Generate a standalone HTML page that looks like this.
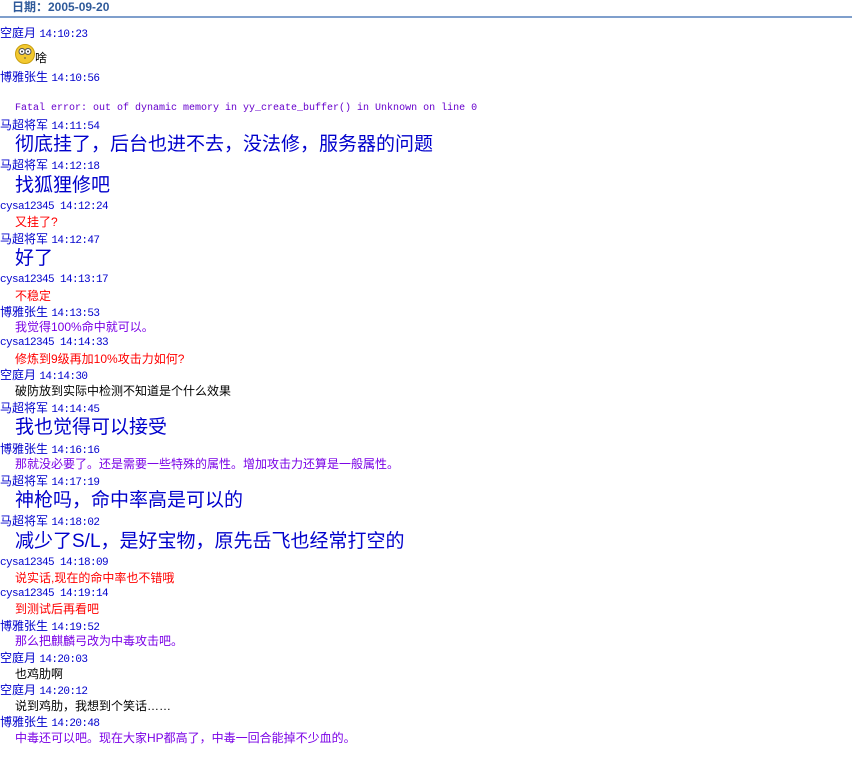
<!DOCTYPE html>
<html><head><meta charset="utf-8"><style>
body{margin:0;width:852px;height:769px;background:#fff;position:relative;overflow:hidden;font-family:"Liberation Sans","Noto Sans CJK SC","WenQuanYi Zen Hei",sans-serif;font-size:12px}
.h{position:absolute;left:12px;top:0;font-weight:bold;color:#2f5a9a;font-size:12px;line-height:14px}
.ln{position:absolute;left:0;top:16px;width:852px;height:2px;background:#7f9fcc}
.r{position:absolute;left:0;white-space:nowrap;line-height:16px;height:16px}
.n{color:#0000cc;font-size:12px}
.t{font-family:"Liberation Mono",monospace;font-size:11px;letter-spacing:-0.6px}
.m{left:15px}
.b{font-size:19px;color:#0000cc;line-height:22px;height:22px;left:15px}
.red{color:#ff0000}.pur{color:#7a00e6}.blk{color:#000}
.f{font-family:"Liberation Mono",monospace;font-size:10px;color:#6600cc}
</style></head><body>
<div class="h">日期：2005-09-20</div><div class="ln"></div>
<div class="r n" style="top:25px">空庭月 <span class="t">14:10:23</span></div>
<div class="r m blk" style="top:44px;height:22px;line-height:28px"><svg width="20" height="20" viewBox="0 0 20 20" style="vertical-align:-2px"><circle cx="10" cy="10" r="9.5" fill="#f2c830" stroke="#c9a010"/><circle cx="7" cy="7.5" r="3" fill="#fff" stroke="#555"/><circle cx="13" cy="7.5" r="3" fill="#fff" stroke="#555"/><circle cx="7" cy="7.5" r="1" fill="#333"/><circle cx="13" cy="7.5" r="1" fill="#333"/><path d="M9 14h2" stroke="#555"/></svg>啥</div>
<div class="r n" style="top:69px">博雅张生 <span class="t">14:10:56</span></div>
<div class="r m f" style="top:101px">Fatal error: out of dynamic memory in yy_create_buffer() in Unknown on line 0</div>
<div class="r n" style="top:117px">马超将军 <span class="t">14:11:54</span></div>
<div class="r b" style="top:134px">彻底挂了，后台也进不去，没法修，服务器的问题</div>
<div class="r n" style="top:157px">马超将军 <span class="t">14:12:18</span></div>
<div class="r b" style="top:175px">找狐狸修吧</div>
<div class="r n t" style="top:199px">cysa12345 14:12:24</div>
<div class="r m red" style="top:214px">又挂了?</div>
<div class="r n" style="top:231px">马超将军 <span class="t">14:12:47</span></div>
<div class="r b" style="top:248px">好了</div>
<div class="r n t" style="top:272px">cysa12345 14:13:17</div>
<div class="r m red" style="top:288px">不稳定</div>
<div class="r n" style="top:304px">博雅张生 <span class="t">14:13:53</span></div>
<div class="r m pur" style="top:319px">我觉得100%命中就可以。</div>
<div class="r n t" style="top:335px">cysa12345 14:14:33</div>
<div class="r m red" style="top:351px">修炼到9级再加10%攻击力如何?</div>
<div class="r n" style="top:367px">空庭月 <span class="t">14:14:30</span></div>
<div class="r m blk" style="top:383px">破防放到实际中检测不知道是个什么效果</div>
<div class="r n" style="top:400px">马超将军 <span class="t">14:14:45</span></div>
<div class="r b" style="top:417px">我也觉得可以接受</div>
<div class="r n" style="top:441px">博雅张生 <span class="t">14:16:16</span></div>
<div class="r m pur" style="top:456px">那就没必要了。还是需要一些特殊的属性。增加攻击力还算是一般属性。</div>
<div class="r n" style="top:473px">马超将军 <span class="t">14:17:19</span></div>
<div class="r b" style="top:490px">神枪吗，命中率高是可以的</div>
<div class="r n" style="top:513px">马超将军 <span class="t">14:18:02</span></div>
<div class="r b" style="top:531px">减少了S/L，是好宝物，原先岳飞也经常打空的</div>
<div class="r n t" style="top:555px">cysa12345 14:18:09</div>
<div class="r m red" style="top:570px">说实话,现在的命中率也不错哦</div>
<div class="r n t" style="top:586px">cysa12345 14:19:14</div>
<div class="r m red" style="top:601px">到测试后再看吧</div>
<div class="r n" style="top:618px">博雅张生 <span class="t">14:19:52</span></div>
<div class="r m pur" style="top:633px">那么把麒麟弓改为中毒攻击吧。</div>
<div class="r n" style="top:650px">空庭月 <span class="t">14:20:03</span></div>
<div class="r m blk" style="top:666px">也鸡肋啊</div>
<div class="r n" style="top:682px">空庭月 <span class="t">14:20:12</span></div>
<div class="r m blk" style="top:698px">说到鸡肋，我想到个笑话……</div>
<div class="r n" style="top:714px">博雅张生 <span class="t">14:20:48</span></div>
<div class="r m pur" style="top:730px">中毒还可以吧。现在大家HP都高了，中毒一回合能掉不少血的。</div>
</body></html>
